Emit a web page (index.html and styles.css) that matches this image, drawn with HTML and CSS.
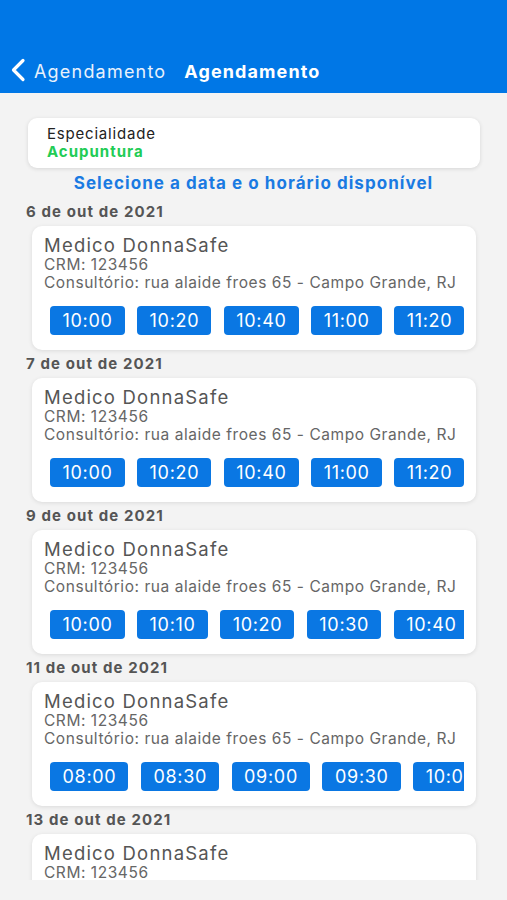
FILE: index.html
```html
<!DOCTYPE html>
<html lang="pt-BR">
<head>
<meta charset="utf-8">
<title>Agendamento</title>
<link rel="stylesheet" href="styles.css">
</head>
<body>
<header class="header">
  <div class="nav">
    <a class="back">
      <svg class="chev" width="16" height="24" viewBox="0 0 16 24"><path d="M13 2.5 L3.5 12 L13 21.5" fill="none" stroke="#fff" stroke-width="3.2" stroke-linecap="round" stroke-linejoin="round"/></svg>
      <span class="back-label">Agendamento</span>
    </a>
    <span class="nav-title">Agendamento</span>
  </div>
</header>
<main class="content">
  <section class="spec">
    <div class="spec-label">Especialidade</div>
    <div class="spec-value">Acupuntura</div>
  </section>
  <h2 class="prompt">Selecione a data e o horário disponível</h2>

  <div class="date">6 de out de 2021</div>
  <article class="card">
    <div class="doc">Medico DonnaSafe</div>
    <div class="info">CRM: 123456</div>
    <div class="info">Consultório: rua alaide froes 65 - Campo Grande, RJ</div>
    <div class="slots"><span class="slot">10:00</span><span class="slot">10:20</span><span class="slot">10:40</span><span class="slot">11:00</span><span class="slot">11:20</span></div>
  </article>

  <div class="date">7 de out de 2021</div>
  <article class="card">
    <div class="doc">Medico DonnaSafe</div>
    <div class="info">CRM: 123456</div>
    <div class="info">Consultório: rua alaide froes 65 - Campo Grande, RJ</div>
    <div class="slots"><span class="slot">10:00</span><span class="slot">10:20</span><span class="slot">10:40</span><span class="slot">11:00</span><span class="slot">11:20</span></div>
  </article>

  <div class="date">9 de out de 2021</div>
  <article class="card">
    <div class="doc">Medico DonnaSafe</div>
    <div class="info">CRM: 123456</div>
    <div class="info">Consultório: rua alaide froes 65 - Campo Grande, RJ</div>
    <div class="slots"><span class="slot">10:00</span><span class="slot">10:10</span><span class="slot">10:20</span><span class="slot">10:30</span><span class="slot">10:40</span></div>
  </article>

  <div class="date">11 de out de 2021</div>
  <article class="card">
    <div class="doc">Medico DonnaSafe</div>
    <div class="info">CRM: 123456</div>
    <div class="info">Consultório: rua alaide froes 65 - Campo Grande, RJ</div>
    <div class="slots"><span class="slot">08:00</span><span class="slot">08:30</span><span class="slot">09:00</span><span class="slot">09:30</span><span class="slot">10:00</span></div>
  </article>

  <div class="date">13 de out de 2021</div>
  <article class="card">
    <div class="doc">Medico DonnaSafe</div>
    <div class="info">CRM: 123456</div>
    <div class="info">Consultório: rua alaide froes 65 - Campo Grande, RJ</div>
    <div class="slots"><span class="slot">08:00</span><span class="slot">08:30</span><span class="slot">09:00</span><span class="slot">09:30</span><span class="slot">10:00</span></div>
  </article>
</main>
</body>
</html>
```
FILE: styles.css
```css
* { box-sizing: border-box; }
html, body {
  margin: 0;
  padding: 0;
}
body {
  width: 507px;
  height: 900px;
  overflow: hidden;
  background: #f3f3f3;
  font-family: Inter, "Liberation Sans", Arial, sans-serif;
  color: #555;
}
.header {
  height: 93px;
  background: #0077e6;
  display: flex;
  align-items: flex-end;
}
.nav {
  height: 44px;
  width: 100%;
  display: flex;
  align-items: center;
  padding-left: 10px;
  color: #fff;
}
.back {
  display: flex;
  align-items: center;
  gap: 8px;
}
.chev { display: block; margin-top: -2px; }
.back-label {
  font-size: 18px;
  letter-spacing: 1.2px;
  font-weight: 400;
  color: #e8f1fc;
}
.nav-title {
  margin-left: 18px;
  font-size: 18px;
  letter-spacing: 1.1px;
  font-weight: 700;
}
.content {
  height: 787px;
  overflow: hidden;
  display: flex;
  flex-direction: column;
  padding-top: 25px;
}
.spec {
  margin: 0 27px 0 28px;
  height: 50px;
  background: #fff;
  border-radius: 9px;
  box-shadow: 0 1px 4px rgba(0,0,0,0.12);
  padding: 7px 19px;
  flex: none;
}
.spec-label {
  font-size: 15px;
  letter-spacing: 0.8px;
  line-height: 18px;
  color: #222;
}
.spec-value {
  font-size: 15px;
  letter-spacing: 1px;
  line-height: 18px;
  font-weight: 700;
  color: #22cc55;
}
.prompt {
  margin: 0;
  height: 30px;
  line-height: 30px;
  text-align: center;
  font-size: 17px;
  letter-spacing: 1.05px;
  font-weight: 700;
  color: #1a7ae2;
  flex: none;
}
.date {
  height: 28px;
  line-height: 28px;
  padding-left: 26px;
  font-size: 15px;
  letter-spacing: 1.1px;
  font-weight: 700;
  color: #555;
  flex: none;
}
.card {
  margin: 0 31px 0 32px;
  background: #fff;
  border-radius: 10px;
  box-shadow: 0 1px 4px rgba(0,0,0,0.1);
  padding: 8px 12px 15px 12px;
  flex: none;
}
.doc {
  font-size: 18.5px;
  letter-spacing: 1.2px;
  line-height: 22px;
  color: #555;
}
.info {
  font-size: 15.5px;
  letter-spacing: 0.55px;
  line-height: 18px;
  color: #666;
  white-space: nowrap;
}
.slots {
  margin: 14px 0 0 6px;
  display: flex;
  gap: 12.5px;
  overflow: hidden;
}
.slot {
  flex: none;
  height: 29px;
  line-height: 29px;
  padding: 0 12px 0 12.5px;
  background: #0a77e3;
  border-radius: 4px;
  color: #fff;
  font-size: 18px;
  letter-spacing: 0.7px;
}
```
